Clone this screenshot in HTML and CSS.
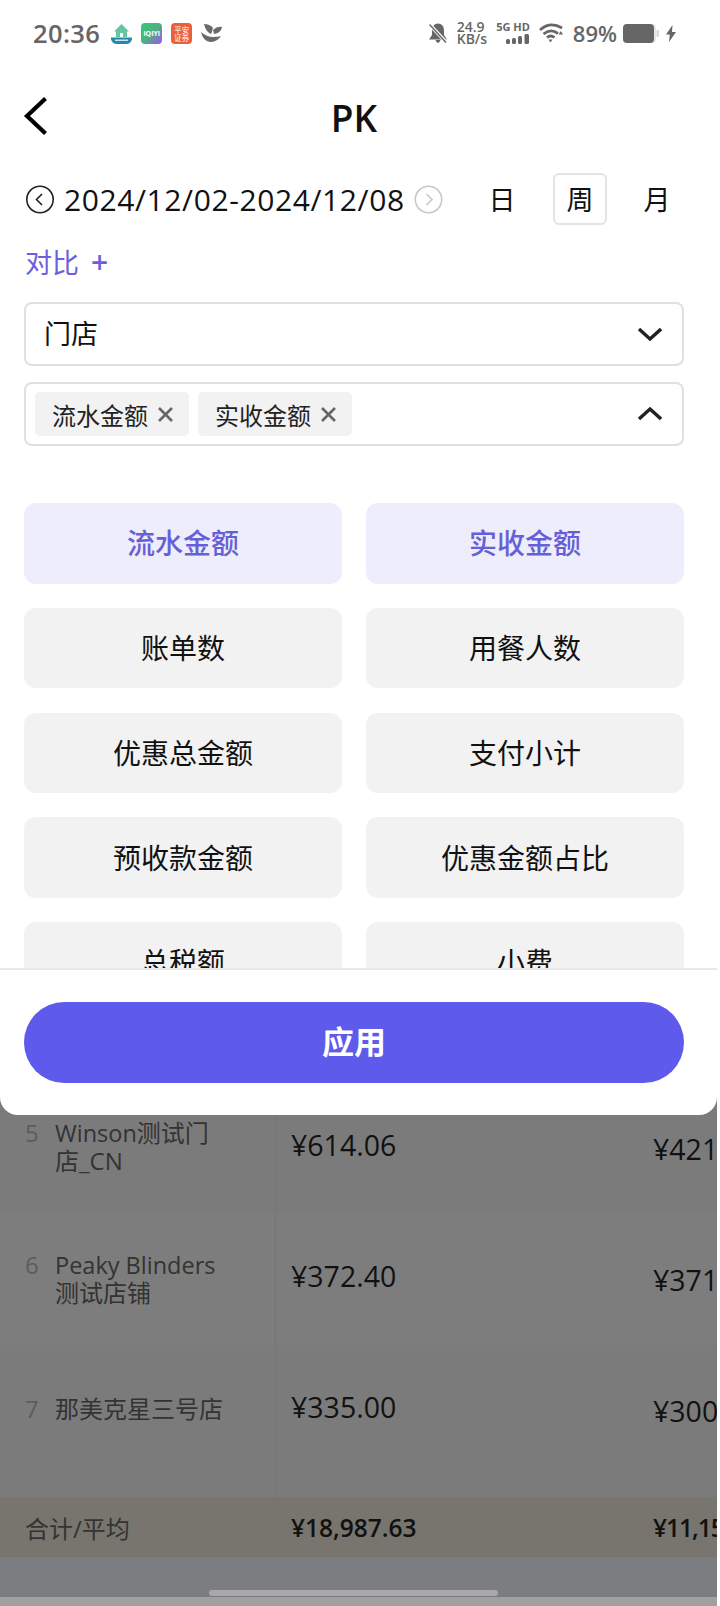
FILE: index.html
```html
<!DOCTYPE html>
<html lang="zh-CN">
<head>
<meta charset="utf-8">
<title>PK</title>
<link rel="stylesheet" href="styles.css">
</head>
<body>
<div class="backdrop">
  <div class="table-rows">
    <div class="row row-5">
      <div class="cell-name"><span class="rank">5</span><span class="name"><span class="latin">Winson</span>测试门<br>店_CN</span></div>
      <div class="cell-a">¥614.06</div>
      <div class="cell-b">¥421</div>
    </div>
    <div class="row row-6">
      <div class="cell-name"><span class="rank">6</span><span class="name"><span class="latin">Peaky Blinders</span><br>测试店铺</span></div>
      <div class="cell-a">¥372.40</div>
      <div class="cell-b">¥371</div>
    </div>
    <div class="row row-7">
      <div class="cell-name"><span class="rank">7</span><span class="name">那美克星三号店</span></div>
      <div class="cell-a">¥335.00</div>
      <div class="cell-b">¥300</div>
    </div>
  </div>
  <div class="total">
    <div class="total-label">合计/平均</div>
    <div class="total-a">¥18,987.63</div>
    <div class="total-b">¥11,15</div>
  </div>
  <div class="home-area"><div class="home-bar"></div></div>
  <div class="home-strip"></div>
</div>

<div class="sheet">
  <div class="statusbar">
    <div class="status-left">
      <span class="clock">20:36</span>
      <svg class="app" width="21" height="21" viewBox="0 0 21 21"><path d="M10.5 1 L18 8.5 H16 V14 H5 V8.5 H3 Z" fill="#62c6a2"/><rect x="9" y="10" width="3" height="4" fill="#fff"/><path d="M0 14.5 H21 V16 Q20 21 15 21 H6 Q1 21 0 16 Z" fill="#2a86a8"/><rect x="4" y="16.5" width="13" height="1.5" fill="#bfe6ef"/></svg>
      <span class="app app-iqiyi">iQIYI</span>
      <span class="app app-pingan">平安<br>证券</span>
      <svg class="app" width="21" height="21" viewBox="0 0 21 21"><path d="M3 1 Q9 1 12 5 Q11 9 10 11 Q5 9 3 1 Z" fill="#6b6b6b"/><path d="M12 7 Q16 3 21 4 Q20 10 13 11 Z" fill="#6b6b6b"/><path d="M0 9 Q6 14 12 14 Q17 14 20 13 Q16 19 9 19 Q2 18 0 9 Z" fill="#6b6b6b"/></svg>
    </div>
    <div class="status-right">
      <svg class="st-bell" width="18" height="20" viewBox="0 0 18 20"><path d="M9 0.5 Q14.5 0.5 15 7 V12 L18 16.5 H0 L3 12 V7 Q3.5 0.5 9 0.5 Z" fill="#666"/><path d="M6.5 17 H11.5 Q10.5 20 9 20 Q7.5 20 6.500 17 Z" fill="#666"/><path d="M1 2 L17 19" stroke="#fff" stroke-width="3.4"/><path d="M0.5 1.5 L17 19.500" stroke="#666" stroke-width="1.5"/></svg>
      <span class="speed">24.9<br>KB/s</span>
      <span class="net"><span class="net-label">5G HD</span><svg width="24" height="10" viewBox="0 0 24 10"><rect x="0" y="5" width="4" height="5" rx="1.5" fill="#666"/><rect x="6" y="4" width="4" height="6" rx="1.5" fill="#666"/><rect x="12" y="2" width="4" height="8" rx="1.5" fill="#666"/><rect x="18.5" y="0" width="4.5" height="10" rx="1.5" fill="#666"/></svg></span>
      <svg class="st-wifi" width="24" height="20" viewBox="0 0 24 20"><path d="M1 7 Q11 -2 23 5" fill="none" stroke="#666" stroke-width="2.8"/><path d="M4.5 11 Q11.5 5 19 10.5" fill="none" stroke="#666" stroke-width="2.8"/><path d="M8 14.5 Q11.5 11.5 15.5 14.5" fill="none" stroke="#666" stroke-width="2.8"/><path d="M9.5 16.5 H13.5 L11.5 19.5 Z" fill="#666"/><path d="M19.5 11.5 H24 L21.8 8 Z" fill="#666"/></svg>
      <span class="battery-pct">89%</span>
      <svg class="st-batt" width="36" height="19" viewBox="0 0 36 19"><rect x="0" y="0" width="33" height="19" rx="4" fill="#e6e6e6"/><rect x="0" y="0" width="31" height="19" rx="4" fill="#666"/><rect x="33.5" y="6" width="2.5" height="7" rx="1" fill="#d8d8d8"/></svg>
      <svg class="st-bolt" width="10" height="17" viewBox="0 0 10 17"><path d="M6.5 0 L0 9.5 H3.8 L3 17 L10 7 H6 Z" fill="#666"/></svg>
    </div>
  </div>

  <header class="nav">
    <svg class="nav-back" width="26" height="40" viewBox="0 0 26 40"><path d="M23.5 2.500 L5 20 L23.5 37.500" fill="none" stroke="#000" stroke-width="4.200"/></svg>
    <h1 class="nav-title">PK</h1>
  </header>

  <div class="date-row">
    <svg class="circle-arrow" width="29" height="29" viewBox="0 0 29 29"><circle cx="15" cy="14.5" r="13.2" fill="none" stroke="#222" stroke-width="1.6"/><path d="M17 9 L11.5 14.5 L17 20" fill="none" stroke="#222" stroke-width="1.6"/></svg>
    <span class="date-text">2024/12/02-2024/12/08</span>
    <svg class="circle-arrow" width="29" height="29" viewBox="0 0 29 29"><circle cx="14.5" cy="14.5" r="13.2" fill="none" stroke="#c8c8c8" stroke-width="1.6"/><path d="M12.5 9 L18 14.5 L12.5 20" fill="none" stroke="#c8c8c8" stroke-width="1.6"/></svg>
    <div class="period-tabs">
      <span class="period">日</span>
      <span class="period period-active">周</span>
      <span class="period">月</span>
    </div>
  </div>

  <div class="compare">对比<span class="compare-plus">+</span></div>

  <div class="select select-store">
    <span class="select-value">门店</span>
    <svg width="26" height="18" viewBox="0 0 26 18"><path d="M3 4 L14 14 L25 4" fill="none" stroke="#222" stroke-width="3.4"/></svg>
  </div>

  <div class="select select-metrics">
    <div class="tags">
      <span class="tag">流水金额<svg class="tag-x" width="17" height="17" viewBox="0 0 17 17"><path d="M2 2 L15 15 M15 2 L2 15" fill="none" stroke="#666" stroke-width="2.6"/></svg></span>
      <span class="tag">实收金额<svg class="tag-x" width="17" height="17" viewBox="0 0 17 17"><path d="M2 2 L15 15 M15 2 L2 15" fill="none" stroke="#666" stroke-width="2.6"/></svg></span>
    </div>
    <svg width="26" height="18" viewBox="0 0 26 18"><path d="M3 14 L14 4 L25 14" fill="none" stroke="#222" stroke-width="3.4"/></svg>
  </div>

  <div class="options-clip">
    <div class="options">
      <div class="option option-on">流水金额</div>
      <div class="option option-on">实收金额</div>
      <div class="option">账单数</div>
      <div class="option">用餐人数</div>
      <div class="option">优惠总金额</div>
      <div class="option">支付小计</div>
      <div class="option">预收款金额</div>
      <div class="option">优惠金额占比</div>
      <div class="option">总税额</div>
      <div class="option">小费</div>
    </div>
  </div>

  <div class="footer">
    <button class="apply">应用</button>
  </div>
</div>
</body>
</html>
```
FILE: styles.css
```css
* { box-sizing: border-box; margin: 0; padding: 0; }
html, body { width: 720px; height: 1606px; overflow: hidden; }
body {
  position: relative;
  background: #fff;
  font-family: "Open Sans", "Noto Sans CJK SC", sans-serif;
  color: #111;
}

/* dimmed page behind the sheet */
.backdrop { position: absolute; left: 0; top: 1090px; width: 717px; bottom: 0; background: #7c7c7c; display: flex; flex-direction: column; overflow: hidden; }
.table-rows { flex: none; }
.row { display: flex; align-items: flex-start; background: #7b7b7b; white-space: nowrap; }
.row-5 { height: 123px; }
.row-6 { height: 132px; background: #7d7d7d; }
.row-7 { height: 152px; }
.cell-name { flex: none; width: 276px; height: 100%; padding-left: 25px; display: flex; border-right: 1px solid #757575; color: #333; font-size: 24px; line-height: 28px; }
.rank { width: 30px; color: #5c5c5c; flex: none; }
.name { display: block; }
.latin { font-size: 23.5px; }
.cell-a { flex: none; width: 377px; padding-left: 15px; font-size: 28.5px; line-height: 34px; font-weight: 500; color: #111; }
.cell-b { font-size: 28.5px; line-height: 34px; font-weight: 500; color: #111; }
.row-5 .cell-name { padding-top: 29px; }
.row-5 .cell-a { padding-top: 38px; }
.row-5 .cell-b { padding-top: 42px; }
.row-6 .cell-name { padding-top: 38px; }
.row-6 .cell-a { padding-top: 46px; }
.row-6 .cell-b { padding-top: 50px; }
.row-7 .cell-name { padding-top: 50px; }
.row-7 .cell-a { padding-top: 45px; }
.row-7 .cell-b { padding-top: 49px; }
.total { flex: none; height: 60px; background: #78746e; display: flex; align-items: center; font-size: 24.5px; white-space: nowrap; }
.total-label { flex: none; width: 276px; padding-left: 25px; font-size: 24px; color: #333; }
.total-a { flex: none; width: 377px; padding-left: 15px; color: #111; font-weight: 600; }
.total-b { color: #111; font-weight: 600; letter-spacing: -1px; }
.home-area { flex: none; height: 40px; background: #7c7d80; display: flex; justify-content: flex-start; align-items: flex-end; padding: 0 0 1px 209px; }
.home-bar { width: 289px; height: 6px; border-radius: 3px; background: #a8a8a8; }
.home-strip { flex: 1; background: #a0a0a0; }

/* white sheet */
.sheet { position: absolute; left: 0; top: 0; width: 717px; height: 1115px; background: #fff; border-radius: 0 0 18px 18px; display: flex; flex-direction: column; }
.statusbar { flex: none; height: 88px; padding: 13px 41px 0 33px; display: flex; justify-content: space-between; align-items: flex-start; color: #666; }
.status-left, .status-right { display: flex; align-items: center; height: 40px; }
.clock { font-size: 25.5px; font-weight: 600; color: #666; margin-right: 11px; letter-spacing: 0.4px; }
.app { flex: none; margin-right: 9px; }
.app-iqiyi { width: 21px; height: 21px; border-radius: 4px; background: linear-gradient(135deg, #35c47c 15%, #50b080 50%, #a050f8); color: #fff; font-size: 7px; font-weight: 700; text-align: center; line-height: 21px; }
.app-pingan { width: 21px; height: 21px; border-radius: 4px; background: #e9603a; color: #fff; font-size: 7.5px; text-align: center; line-height: 8px; padding-top: 3px; }
.status-right svg { flex: none; }
.speed { font-size: 14px; line-height: 12px; font-weight: 600; margin: 0 0 0 10px; color: #666; white-space: nowrap; }
.net { display: flex; flex-direction: column; align-items: flex-end; margin-left: 9px; gap: 2px; }
.net-label { font-size: 11px; line-height: 10px; font-weight: 700; white-space: nowrap; }
.st-wifi { margin-left: 9px; }
.battery-pct { font-size: 22px; font-weight: 600; margin-left: 10px; color: #666; }
.st-batt { margin-left: 6px; }
.st-bolt { margin-left: 7px; }

.nav { flex: none; height: 60px; position: relative; display: flex; align-items: center; justify-content: center; padding-right: 9px; }
.nav-back { position: absolute; left: 22px; top: 8px; }
.nav-title { font-size: 37px; font-weight: 600; line-height: 58px; color: #111; }

.date-row { flex: none; height: 60px; margin-top: 21px; padding: 0 33px 0 25px; display: flex; align-items: center; }
.date-text { font-size: 30px; margin: 0 9px 0 10px; color: #111; white-space: nowrap; letter-spacing: 0.6px; }
.period-tabs { margin-left: auto; display: flex; }
.period { width: 54px; height: 52px; line-height: 49px; text-align: center; font-size: 27px; border: 2px solid transparent; border-radius: 6px; color: #111; }
.period-active { border-color: #e4e4e4; margin: 0 23px 0 24px; }

.compare { flex: none; margin: 13px 0 0 25px; height: 40px; line-height: 40px; font-size: 27px; color: #6a60df; }
.compare-plus { margin-left: 12px; font-size: 30px; font-weight: 600; }

.select { flex: none; margin: 20px 0 0 24px; width: 660px; height: 64px; border: 2px solid #e0e0e0; border-radius: 8px; display: flex; align-items: center; justify-content: space-between; padding: 0 20px 0 18px; }
.select-metrics { margin-top: 16px; padding-left: 9px; }
.select-value { font-size: 27px; color: #111; margin-bottom: 4px; }
.tags { display: flex; gap: 9px; }
.tag { width: 154px; height: 44px; background: #f2f2f2; border-radius: 5px; padding-left: 17px; display: flex; align-items: center; font-size: 24px; color: #222; }
.tag-x { flex: none; margin-left: 9px; }

.options-clip { flex: none; height: 522px; overflow: hidden; padding-top: 57px; }
.options { margin-left: 24px; display: grid; grid-template-columns: 318px 318px; grid-auto-rows: 80.5px; column-gap: 24px; row-gap: 24.25px; }
.option { background: #f2f2f2; border-radius: 12px; display: flex; align-items: center; justify-content: center; font-size: 28px; color: #111; padding-bottom: 2px; }
.option-on { background: #eeedfb; color: #6560d8; font-weight: 500; }

.footer { flex: 1; border-top: 2px solid #e8e8e8; padding: 32px 0 0 24px; }
.apply { width: 660px; height: 81px; border: 0; border-radius: 41px; background: #5e5aec; color: #fff; font-family: inherit; font-size: 32px; font-weight: 600; padding-bottom: 5px; }
```
